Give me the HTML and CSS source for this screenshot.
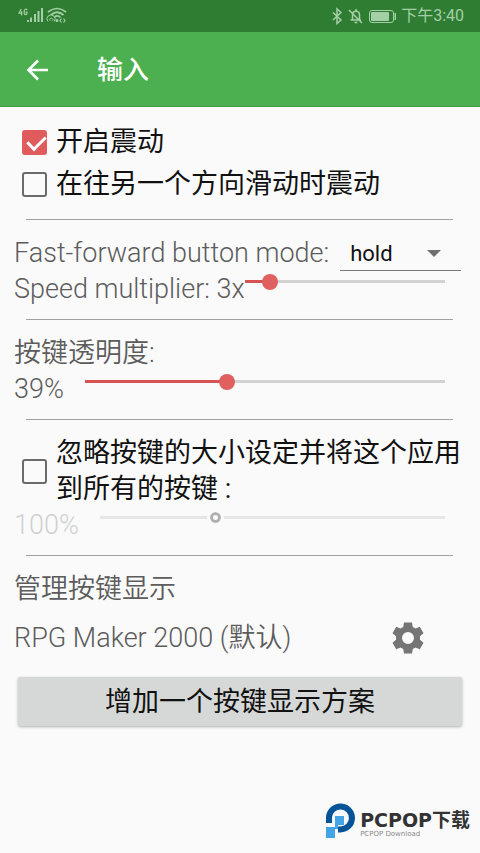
FILE: index.html
```html
<!DOCTYPE html>
<html lang="zh-CN">
<head>
<meta charset="utf-8">
<meta name="viewport" content="width=device-width, initial-scale=1">
<title>输入</title>
<link rel="stylesheet" href="styles.css">
</head>
<body>
<div class="status">
  <div class="status-group">
    <svg width="50" height="18" viewBox="0 0 50 18" aria-hidden="true">
      <g fill="none" stroke="currentColor" stroke-width="1.2">
        <path d="M3.2 2 1 6.2h3.4M3.6 4.2V8.500M9 3.200C8.600 1.800 6.200 1.800 6.200 4v2c0 2.200 2.800 2.200 2.800 0V5.200H7.600"/>
      </g>
      <g fill="currentColor">
        <rect x="9" y="13" width="2" height="2"/><rect x="12" y="10.500" width="2" height="4.500"/><rect x="16" y="7" width="2" height="8"/><rect x="19.500" y="4" width="2" height="11"/><rect x="23" y="1" width="2" height="14"/>
        <circle cx="39" cy="13.500" r="1.500"/>
      </g>
      <g fill="none" stroke="currentColor" stroke-width="1.700">
        <path d="M30 5Q39 -2 48 5M33 8Q39 2.500 45.500 8M36.500 10Q39.500 7.500 42.500 10.500"/>
        <path d="M30 14.500a4 4 0 1 1 6 0M32 13.500a1.500 1.500 0 1 1 2.500 0" stroke-width="1"/>
        <path d="m43.500 11.500-1.500 2 1.500 2M45.500 11.500l1.500 2-1.500 2" stroke-width="1.200"/>
      </g>
    </svg>
  </div>
  <div class="status-group">
    <svg width="64" height="18" viewBox="0 0 64 18" aria-hidden="true">
      <g fill="none" stroke="currentColor" stroke-width="1.500">
        <path d="m1 5.500 8 7.500-4 3.500V2l4 3.500L1 13"/>
        <path d="M20.500 12.500V8c0-5 7-5 7 0v4.500M18.500 13H29M22.500 15.500h3M24 2v2M17 3l13 13"/>
        <rect x="37.500" y="3.500" width="24" height="12" rx="2.500" stroke-width="1"/>
      </g>
      <rect x="39" y="5" width="18" height="9" rx="1" fill="currentColor"/>
      <rect x="62.500" y="6" width="1.500" height="7" fill="currentColor"/>
    </svg>
    <span>下午3:40</span>
  </div>
</div>
<header class="appbar">
  <button class="icon-button" type="button" aria-label="返回">
    <svg width="24" height="24" viewBox="0 0 24 24" aria-hidden="true"><path d="M23 12H4M13 2.500 3.500 12l9.500 9.500" fill="none" stroke="currentColor" stroke-width="2.600"/></svg>
  </button>
  <h1>输入</h1>
</header>
<main>
  <section>
    <label class="check"><input type="checkbox" checked><span>开启震动</span></label>
    <label class="check"><input type="checkbox"><span>在往另一个方向滑动时震动</span></label>
  </section>
  <hr>
  <section>
    <div class="row">
      <label for="mode">Fast-forward button mode:</label>
      <div class="select"><select id="mode"><option>hold</option></select></div>
    </div>
    <div class="row">
      <label for="speed">Speed multiplier: 3x</label>
      <input id="speed" type="range" min="1" max="22" value="3" style="--fill: 12%">
    </div>
  </section>
  <hr>
  <section>
    <label class="line" for="opacity">按键透明度:</label>
    <div class="row wide">
      <output for="opacity">39%</output>
      <input id="opacity" type="range" value="39" style="--fill: 39%">
    </div>
  </section>
  <hr>
  <section>
    <label class="check"><input type="checkbox"><span>忽略按键的大小设定并将这个应用到所有的按键 :</span></label>
    <div class="row wide disabled">
      <output for="size">100%</output>
      <input id="size" type="range" min="0" max="305" value="100" aria-label="按键大小" disabled>
    </div>
  </section>
  <hr>
  <section class="layouts">
    <h2>管理按键显示</h2>
    <div class="layout">
      <span>RPG Maker 2000 (默认)</span>
      <button class="icon-button" type="button" aria-label="设置">
        <svg width="32" height="32" viewBox="0 0 32 32" aria-hidden="true"><path fill="currentColor" fill-rule="evenodd" d="M12 .500h8l.800 4.500 2.700 1.500 4.300-1.700 3.700 6.500-3.500 2.900v3.600l3.500 2.900-3.700 6.500-4.300-1.700-2.700 1.500-.800 4.500h-8l-.800-4.500-2.700-1.500-4.300 1.700L.500 20.700 4 17.800v-3.600L.500 11.300l3.700-6.500 4.300 1.700L11.200 5zM16 10a6 6 0 1 0 0 12 6 6 0 0 0 0-12z"/></svg>
      </button>
    </div>
    <button class="add" type="button">增加一个按键显示方案</button>
  </section>
</main>
<footer>
  <svg width="32" height="36" viewBox="0 0 32 36" aria-hidden="true">
    <path d="M4 20V14A11.500 11.500 0 1 1 15.500 26.500H13" fill="none" stroke="#075398" stroke-width="6"/>
    <path d="M10 13h9v9h-6v4h-3v9H1V24h9z" fill="#43a5e5"/>
  </svg>
  <div class="brand"><strong>PCPOP下载</strong><small>PCPOP Download</small></div>
</footer>
</body>
</html>
```
FILE: styles.css
```css
* { box-sizing: border-box; }

body {
  margin: 0;
  min-height: 100vh;
  display: flex;
  flex-direction: column;
  background: #fafafa;
  color: #5c5c5c;
  font: 350 27px/36px Roboto, "Noto Sans CJK SC", sans-serif;
}

button, select, input { font: inherit; margin: 0; }

.status {
  display: flex;
  justify-content: space-between;
  align-items: center;
  height: 32px;
  padding: 0 16px 0 18px;
  background: #2f7d32;
  color: #a5cfa6;
  font-size: 16px;
  font-weight: 400;
  line-height: 32px;
}

.status-group { display: flex; align-items: center; gap: 5px; }

.appbar {
  display: flex;
  align-items: center;
  gap: 48px;
  height: 75px;
  padding: 2px 25px 0;
  background: #4caf50;
  color: #fff;
  border-bottom: 1px solid #449d48;
}

.icon-button {
  display: flex;
  padding: 0;
  border: 0;
  background: none;
  color: inherit;
}

h1 { margin: 0; font-size: 26px; font-weight: 500; }

main { padding: 14px 14px 0; }

hr { margin: 12px 13px 15px 12px; border: 0; border-top: 1px solid #a0a0a0; }
section:first-child + hr { margin-top: 14px; }

.check {
  display: flex;
  align-items: center;
  gap: 9px;
  min-height: 42px;
  padding-left: 8px;
  color: #111;
  font-weight: 400;
}

.check input {
  appearance: none;
  flex: none;
  width: 25px;
  height: 25px;
  border: 2px solid #6b6b6b;
  border-radius: 3px;
}

.check input:checked {
  border-color: #e05c5c;
  background: #e05c5c;
  position: relative;
}

.check input:checked::after {
  content: "";
  position: absolute;
  left: 7px;
  top: 0;
  width: 8px;
  height: 15px;
  border: solid #fff;
  border-width: 0 3px 3px 0;
  transform: rotate(45deg);
}

.row { display: flex; align-items: flex-start; height: 36px; padding-right: 21px; }
.row > label { white-space: nowrap; }
.line { display: block; }
.wide { gap: 21px; }

.select {
  position: relative;
  flex: 1;
  margin: 0 -16px 0 11px;
  border-bottom: 1px solid #777;
}

.select::after {
  content: "";
  position: absolute;
  right: 20px;
  top: 15px;
  border: solid transparent;
  border-width: 7px 7px 0;
  border-top-color: #707070;
}

select {
  appearance: none;
  display: block;
  width: 100%;
  height: 35px;
  padding: 3px 10px 0;
  border: 0;
  background: none;
  color: #111;
  font-size: 22px;
  font-weight: 400;
  line-height: 32px;
}

input[type="range"] {
  appearance: none;
  flex: 1;
  min-width: 0;
  height: 21px;
  background: linear-gradient(to right, #d65353 var(--fill), #d2d2d2 var(--fill)) center / 100% 3px no-repeat;
}

input[type="range"]::-webkit-slider-thumb {
  appearance: none;
  width: 16px;
  height: 16px;
  border-radius: 50%;
  background: #e05f5f;
}

.disabled { color: #d0d0d0; }

.disabled input[type="range"] {
  background: linear-gradient(#e6e6e6, #e6e6e6) center / 100% 3px no-repeat;
}

.disabled input[type="range"]::-webkit-slider-thumb {
  width: 17px;
  height: 17px;
  border: 3px solid #fafafa;
  background: #fafafa;
  box-shadow: inset 0 0 0 3px #b0b0b0;
}

.layouts { display: flex; flex-direction: column; gap: 13px; }

h2 { margin: 0; font-size: 27px; font-weight: 350; }

.layout {
  display: flex;
  justify-content: space-between;
  align-items: center;
  padding-right: 42px;
}

.layout .icon-button { color: #757575; }

.add {
  margin: 8px 4px 0;
  height: 49px;
  padding: 0;
  border: 0;
  border-radius: 2px;
  background: #d6d8d7;
  color: #111;
  font-weight: 400;
  box-shadow: 0 1px 3px rgb(0 0 0 / 30%);
}

footer {
  display: flex;
  justify-content: flex-end;
  align-items: center;
  gap: 3px;
  margin-top: auto;
  padding: 0 10px 14px;
}

.brand { display: flex; flex-direction: column; padding-top: 5px; }
.brand strong { color: #333; font: 700 19px/20px "DejaVu Sans", "Noto Sans CJK SC", sans-serif; }
.brand small { color: #888; font: 400 7px/8px "DejaVu Sans", sans-serif; }
```
